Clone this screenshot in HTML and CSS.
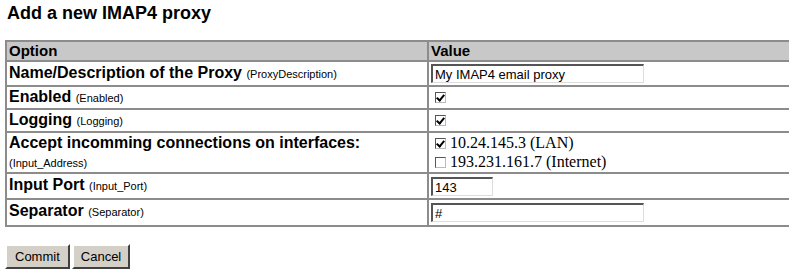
FILE: index.html
```html
<!DOCTYPE html>
<html>
<head>
<meta charset="utf-8">
<link rel="stylesheet" href="styles.css">
</head>
<body>
<h1 class="title">Add a new IMAP4 proxy</h1>
<table class="opts">
  <tr class="head"><th class="c1">Option</th><th class="c2">Value</th></tr>
  <tr class="r-name"><td class="c1"><b>Name/Description of the Proxy</b> <small>(ProxyDescription)</small></td>
    <td class="c2"><input class="txt wide" type="text" value="My IMAP4 email proxy"></td></tr>
  <tr class="r-chk"><td class="c1"><b>Enabled</b> <small>(Enabled)</small></td>
    <td class="c2"><span class="cb on"></span></td></tr>
  <tr class="r-chk"><td class="c1"><b>Logging</b> <small>(Logging)</small></td>
    <td class="c2"><span class="cb on"></span></td></tr>
  <tr class="r-acc"><td class="c1"><b>Accept incomming connections on interfaces:</b><br><small>(Input_Address)</small></td>
    <td class="c2"><div class="iface"><span class="cb on"></span> 10.24.145.3 (LAN)</div><div class="iface"><span class="cb"></span> 193.231.161.7 (Internet)</div></td></tr>
  <tr class="r-port"><td class="c1"><b>Input Port</b> <small>(Input_Port)</small></td>
    <td class="c2"><input class="txt short" type="text" value="143"></td></tr>
  <tr class="r-sep"><td class="c1"><b>Separator</b> <small>(Separator)</small></td>
    <td class="c2"><input class="txt wide" type="text" value="#"></td></tr>
</table>
<div class="btns"><button class="btn b1">Commit</button><button class="btn b2">Cancel</button></div>
</body>
</html>
```
FILE: styles.css
```css
html, body { background: #fff; }
body { margin: 0; padding: 3px 0 0 5px; font-family: "Liberation Sans", Arial, sans-serif; color: #000; overflow: hidden; }
.title { font-size: 18px; font-weight: bold; margin: 0 0 17px 2px; line-height: 20px; }
.opts { border-collapse: collapse; width: 840px; border: 2px solid #8c8c8c; }
.opts th, .opts td { border: 2px solid #8c8c8c; padding: 0 2px; text-align: left; vertical-align: top; }
.opts .c1 { width: 416px; }
.head th { background: #c8c8c8; font-size: 15px; font-weight: bold; height: 18px; line-height: 18px; }
.opts td b { font-size: 16px; }
.opts td small { font-size: 11px; }
.r-name td { height: 23px; line-height: 22px; }
.r-port td { height: 24px; line-height: 22px; }
.r-sep td { height: 25px; line-height: 22px; }
.r-sep .txt { margin-top: 3px; }
.r-port .txt { margin-top: 3px; }
.r-chk td { height: 19px; line-height: 19px; }
.r-acc td { height: 38px; line-height: 19px; }
.r-acc .c1 small { line-height: 17px; }
.txt { font-family: "Liberation Sans", Arial, sans-serif; font-size: 13px; height: 19px; box-sizing: border-box; margin: 2px 0 0 0; padding: 0 2px; border-style: solid; border-color: #555 #ddd #ddd #555; border-width: 2px 1px 1px 2px; vertical-align: top; }
.wide { width: 213px; }
.short { width: 62px; }
.cb { display: inline-block; width: 9px; height: 9px; border: 1px solid #555; border-right-color: #bbb; border-bottom-color: #bbb; margin: 0 0 0 4px; vertical-align: -1px; position: relative; background: #fff; }
.cb.on::after { content: ""; position: absolute; left: 2px; top: 0px; width: 3px; height: 6px; border: solid #000; border-width: 0 2px 2px 0; transform: rotate(40deg); }
.iface { font-family: "Liberation Serif", "Times New Roman", serif; font-size: 16px; height: 19px; line-height: 19px; }
.btns { margin-top: 17px; display: flex; gap: 2px; }
.btn { font-family: "Liberation Sans", Arial, sans-serif; font-size: 13px; background: #d4d0c8; border: 2px solid; border-color: #fff #404040 #404040 #fff; height: 25px; padding: 0 8px; }
.b2 { padding: 0 7px; }
```
